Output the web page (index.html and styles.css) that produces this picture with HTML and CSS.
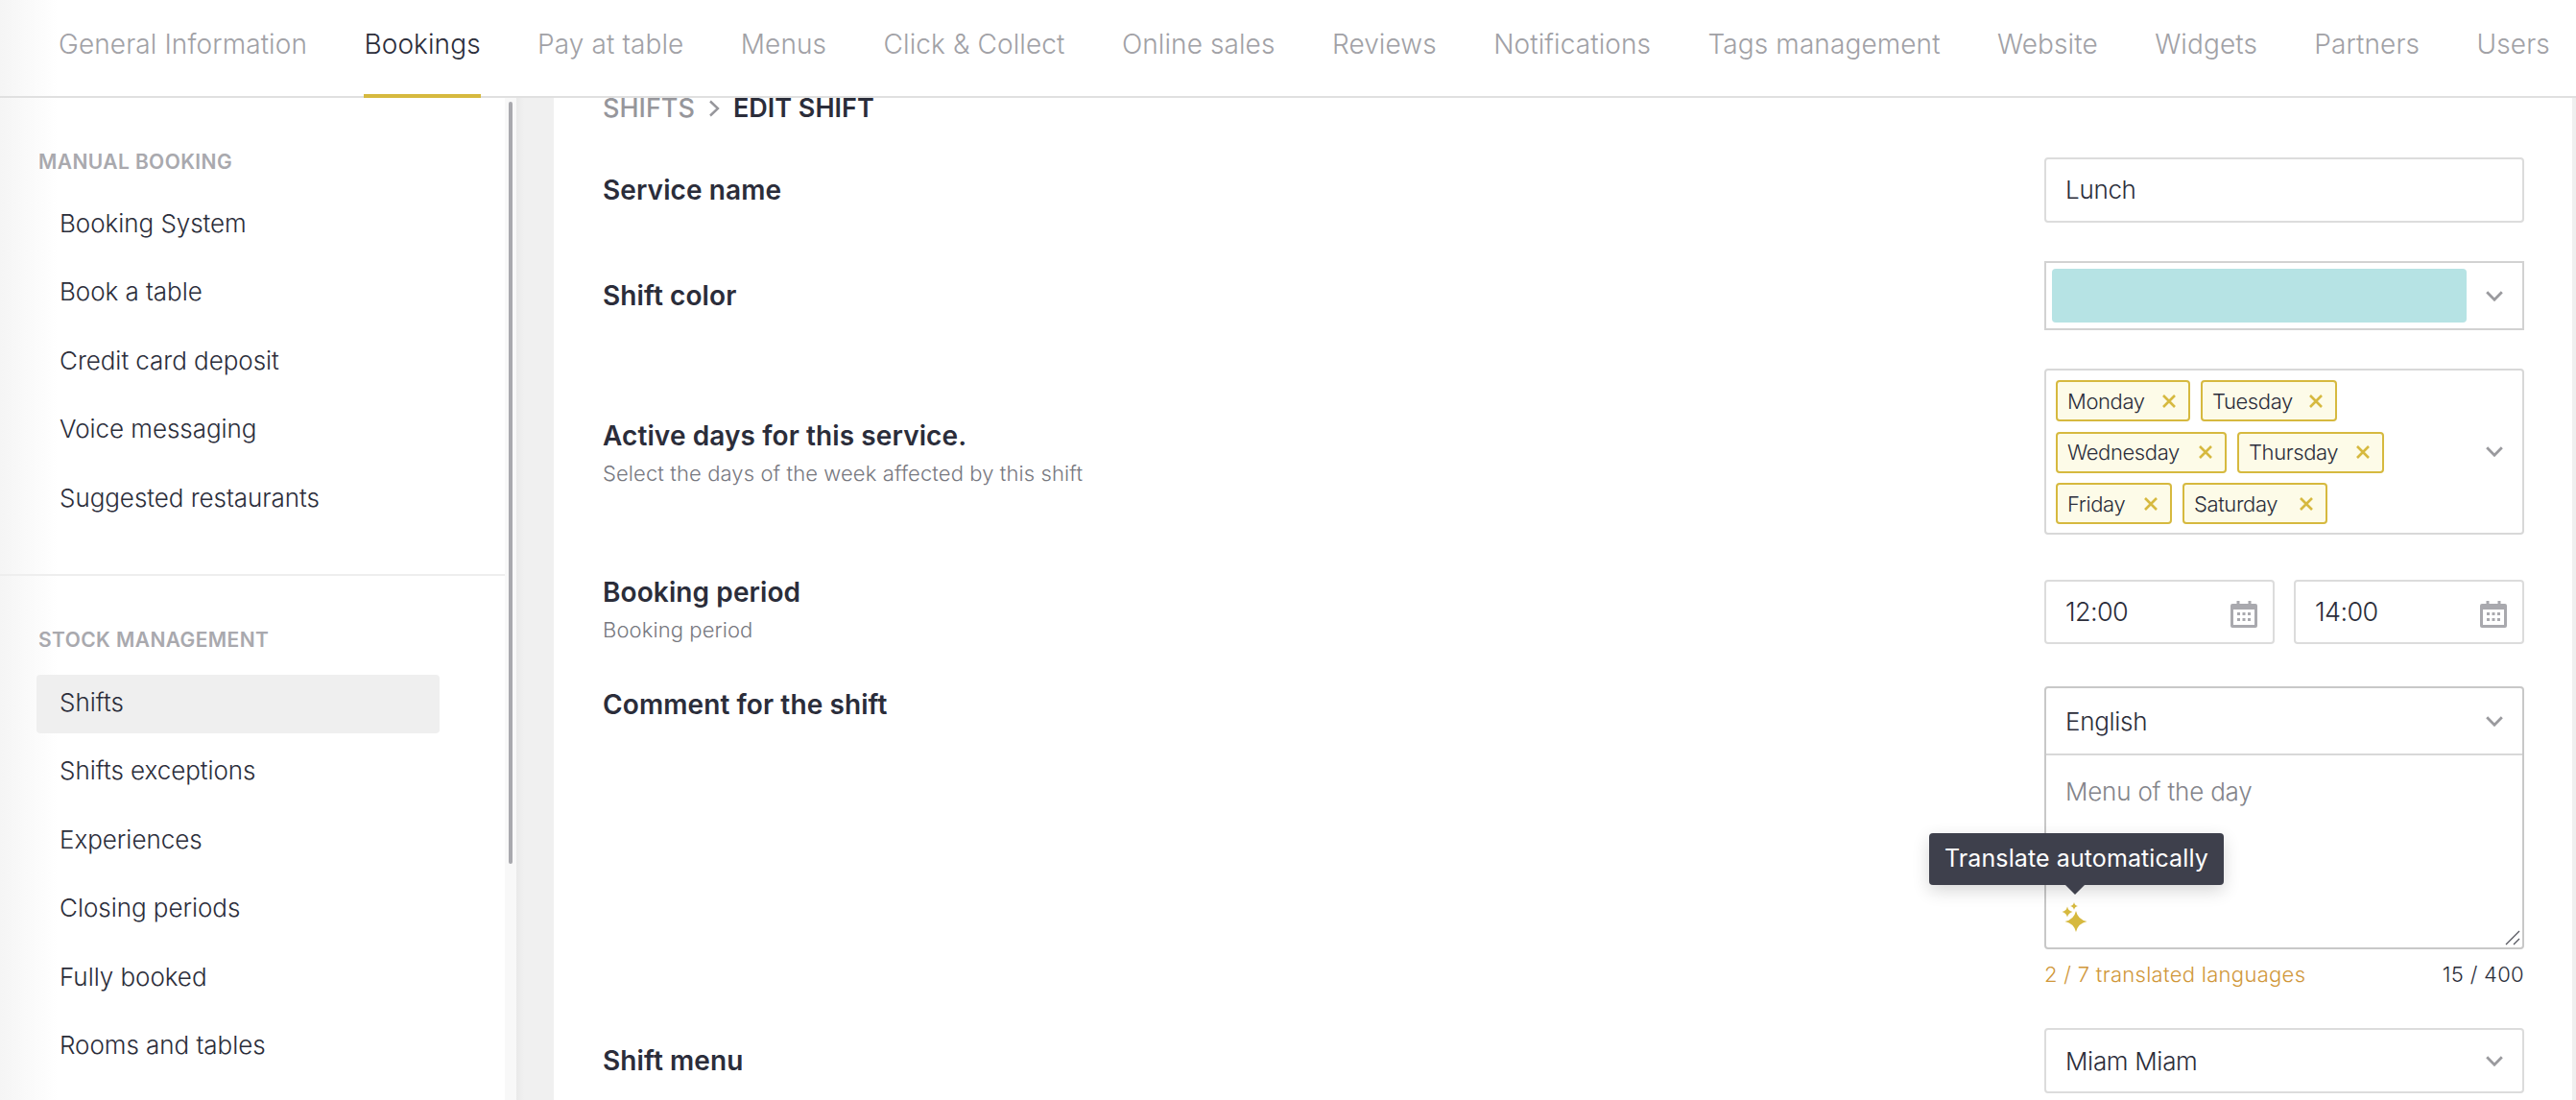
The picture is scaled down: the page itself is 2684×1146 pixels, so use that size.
FILE: index.html
```html
<!DOCTYPE html>
<html lang="en">
<head>
<meta charset="utf-8">
<title>Edit shift</title>
<link rel="stylesheet" href="styles.css">
</head>
<body>
<header class="topbar">
  <nav class="tabs">
    <a class="tab">General Information</a>
    <a class="tab active">Bookings</a>
    <a class="tab">Pay at table</a>
    <a class="tab">Menus</a>
    <a class="tab">Click &amp; Collect</a>
    <a class="tab">Online sales</a>
    <a class="tab">Reviews</a>
    <a class="tab">Notifications</a>
    <a class="tab">Tags management</a>
    <a class="tab">Website</a>
    <a class="tab">Widgets</a>
    <a class="tab">Partners</a>
    <a class="tab">Users</a>
  </nav>
</header>
<div class="layout">
  <aside class="sidebar">
    <div class="scrollthumb"></div>
    <section class="side-group first">
      <h3 class="side-title">MANUAL BOOKING</h3>
      <a class="side-item">Booking System</a>
      <a class="side-item">Book a table</a>
      <a class="side-item">Credit card deposit</a>
      <a class="side-item">Voice messaging</a>
      <a class="side-item">Suggested restaurants</a>
    </section>
    <section class="side-group">
      <h3 class="side-title">STOCK MANAGEMENT</h3>
      <a class="side-item selected">Shifts</a>
      <a class="side-item">Shifts exceptions</a>
      <a class="side-item">Experiences</a>
      <a class="side-item">Closing periods</a>
      <a class="side-item">Fully booked</a>
      <a class="side-item">Rooms and tables</a>
    </section>
  </aside>
  <div class="gutter"></div>
  <main class="panel">
    <div class="crumbs">
      <span class="crumb-parent">SHIFTS</span>
      <svg class="crumb-sep" viewBox="0 0 12 18" width="12" height="18"><path d="M2 1.5 10 9l-8 7.5" fill="none" stroke="#96969b" stroke-width="2.4"/></svg>
      <span class="crumb-current">EDIT SHIFT</span>
    </div>

    <div class="row r1">
      <div class="label"><div class="label-main">Service name</div></div>
      <div class="control"><div class="box input">Lunch</div></div>
    </div>

    <div class="row r2">
      <div class="label"><div class="label-main">Shift color</div></div>
      <div class="control">
        <div class="box color-select">
          <div class="swatch"></div>
          <svg class="chev" viewBox="0 0 18 11" width="18" height="11"><path d="M1.2 1.2 9 9.2l7.8-8" fill="none" stroke="#9a9a9e" stroke-width="2.8"/></svg>
        </div>
      </div>
    </div>

    <div class="row r3">
      <div class="label">
        <div class="label-main">Active days for this service.</div>
        <div class="label-sub">Select the days of the week affected by this shift</div>
      </div>
      <div class="control">
        <div class="box multi">
          <div class="chips">
            <div class="chip-line">
              <span class="chip w-mon">Monday<svg class="x" viewBox="0 0 14 14" width="14" height="14"><path d="M1 1l12 12M13 1 1 13" stroke="#d6b93f" stroke-width="2.6"/></svg></span>
              <span class="chip w-tue">Tuesday<svg class="x" viewBox="0 0 14 14" width="14" height="14"><path d="M1 1l12 12M13 1 1 13" stroke="#d6b93f" stroke-width="2.6"/></svg></span>
            </div>
            <div class="chip-line">
              <span class="chip w-wed">Wednesday<svg class="x" viewBox="0 0 14 14" width="14" height="14"><path d="M1 1l12 12M13 1 1 13" stroke="#d6b93f" stroke-width="2.6"/></svg></span>
              <span class="chip w-thu">Thursday<svg class="x" viewBox="0 0 14 14" width="14" height="14"><path d="M1 1l12 12M13 1 1 13" stroke="#d6b93f" stroke-width="2.6"/></svg></span>
            </div>
            <div class="chip-line">
              <span class="chip w-fri">Friday<svg class="x" viewBox="0 0 14 14" width="14" height="14"><path d="M1 1l12 12M13 1 1 13" stroke="#d6b93f" stroke-width="2.6"/></svg></span>
              <span class="chip w-sat">Saturday<svg class="x" viewBox="0 0 14 14" width="14" height="14"><path d="M1 1l12 12M13 1 1 13" stroke="#d6b93f" stroke-width="2.6"/></svg></span>
            </div>
          </div>
          <svg class="chev" viewBox="0 0 18 11" width="18" height="11"><path d="M1.2 1.2 9 9.2l7.8-8" fill="none" stroke="#9a9a9e" stroke-width="2.8"/></svg>
        </div>
      </div>
    </div>

    <div class="row r4">
      <div class="label">
        <div class="label-main">Booking period</div>
        <div class="label-sub">Booking period</div>
      </div>
      <div class="control times">
        <div class="box time">
          <span class="time-text">12:00</span>
          <svg class="cal" viewBox="0 0 28 28" width="28" height="28"><path fill="#a9a9ae" fill-rule="evenodd" d="M6.500 0h3v3h9V0h3v3H26a2 2 0 0 1 2 2v21a2 2 0 0 1-2 2H2a2 2 0 0 1-2-2V5a2 2 0 0 1 2-2h4.500V0ZM3 9v16h22V9H3Z"/><path fill="#a9a9ae" d="M7 12h3v3H7zM12.500 12h3v3h-3zM18 12h3v3h-3zM7 18h3v3H7zM12.500 18h3v3h-3zM18 18h3v3h-3z"/></svg>
        </div>
        <div class="box time">
          <span class="time-text">14:00</span>
          <svg class="cal" viewBox="0 0 28 28" width="28" height="28"><path fill="#a9a9ae" fill-rule="evenodd" d="M6.500 0h3v3h9V0h3v3H26a2 2 0 0 1 2 2v21a2 2 0 0 1-2 2H2a2 2 0 0 1-2-2V5a2 2 0 0 1 2-2h4.500V0ZM3 9v16h22V9H3Z"/><path fill="#a9a9ae" d="M7 12h3v3H7zM12.500 12h3v3h-3zM18 12h3v3h-3zM7 18h3v3H7zM12.500 18h3v3h-3zM18 18h3v3h-3z"/></svg>
        </div>
      </div>
    </div>

    <div class="row r5">
      <div class="label"><div class="label-main">Comment for the shift</div></div>
      <div class="control">
        <div class="translate-box">
          <div class="lang-head">
            <span>English</span>
            <svg class="chev" viewBox="0 0 18 11" width="18" height="11"><path d="M1.2 1.2 9 9.2l7.8-8" fill="none" stroke="#9a9a9e" stroke-width="2.8"/></svg>
          </div>
          <div class="text-area">
            <div class="placeholder">Menu of the day</div>
            <svg class="sparkle" viewBox="0 0 30 38" width="30" height="38"><path fill="#d6b93f" d="M15 14Q17 23 26.500 25 17 27 15 36 13 27 3.500 25 13 23 15 14Z"/><path fill="#d6b93f" d="M6 9.500Q7 14 11.500 15 7 16 6 20.500 5 16 .5 15 5 14 6 9.500Z"/><path fill="#d6b93f" d="M13 5Q13.700 8.300 17 9 13.700 9.700 13 13 12.300 9.700 9 9 12.300 8.300 13 5Z"/></svg>
            <svg class="resizer" viewBox="0 0 16 16" width="16" height="16"><path d="M1 15 15 1M9 15l6-6" stroke="#55565e" stroke-width="1.300" fill="none"/></svg>
          </div>
          <div class="tooltip">Translate automatically</div>
        </div>
        <div class="box-foot">
          <span class="translated">2 / 7 translated languages</span>
          <span class="count">15 / 400</span>
        </div>
      </div>
    </div>

    <div class="row r6">
      <div class="label"><div class="label-main">Shift menu</div></div>
      <div class="control">
        <div class="box input select">
          <span>Miam Miam</span>
          <svg class="chev" viewBox="0 0 18 11" width="18" height="11"><path d="M1.2 1.2 9 9.2l7.8-8" fill="none" stroke="#9a9a9e" stroke-width="2.8"/></svg>
        </div>
      </div>
    </div>
  </main>
</div>
</body>
</html>
```

FILE: styles.css
```css
* { box-sizing: border-box; }
html, body { height: 100%; }
body {
  margin: 0;
  height: 1146px;
  overflow: hidden;
  background: #fff;
  color: #2b2d3a;
  font-family: "Inter", "Liberation Sans", sans-serif;
  font-weight: 300;
  display: flex;
  flex-direction: column;
}

.topbar {
  height: 102px;
  flex: none;
  border-bottom: 2px solid #e0e0e0;
  background: linear-gradient(90deg, #f5f5f5 0, #fff 60px);
}
.tabs {
  display: flex;
  gap: 59.400px;
  padding-left: 61px;
  height: 100px;
}
.tab {
  height: 102px;
  line-height: 92px;
  font-size: 28px;
  letter-spacing: 0.1px;
  color: #a1a1a6;
  white-space: nowrap;
}
.tab.active {
  color: #2b2d3a;
  border-bottom: 4px solid #d6b93f;
}

.layout { flex: 1; display: flex; min-height: 0; }

.sidebar {
  position: relative;
  width: 538px;
  flex: none;
  padding-right: 12px;
  overflow: hidden;
  background: linear-gradient(90deg, #f5f5f5 0, #fff 60px, #fff 526px, #f8f8f8 526px);
}
.scrollthumb {
  position: absolute;
  top: 4px;
  left: 530px;
  width: 4px;
  height: 794px;
  border-radius: 2px;
  background: #a9a9ae;
}
.side-group { padding: 52px 0 0 38px; }
.side-group.first { padding-top: 52px; border-bottom: 2px solid #eee; height: 498px; }
.side-title {
  margin: 0 0 0 2px;
  height: 30px;
  line-height: 30px;
  font-size: 21px;
  font-weight: 600;
  letter-spacing: 0.400px;
  color: #a9a9ae;
}
.first .side-title { margin-bottom: 20px; }
.side-item {
  display: block;
  width: 420px;
  height: 61px;
  line-height: 58px;
  padding-left: 24px;
  margin-bottom: 10.400px;
  font-size: 26px;
  letter-spacing: -0.050px;
  color: #2b2d3a;
  border-radius: 4px;
}
.side-title + .side-item.selected { margin-top: 21px; }
.side-item.selected { background: #efefef; }

.gutter { width: 39px; flex: none; background: linear-gradient(90deg, #e9e9e9, #f0f0f0 8px); }

.panel {
  flex: 1;
  min-width: 0;
  padding: 0 50px 0 51px;
  margin-right: 4px;
  background: #fff;
  box-shadow: 4px 0 0 #efefef;
}
.crumbs {
  display: flex;
  align-items: center;
  height: 22px;
  gap: 14px;
  font-size: 27px;
  line-height: 22px;
  font-weight: 500;
}
.crumb-parent { color: #96969b; }
.crumb-current { color: #2b2d3a; font-weight: 600; }

.row { display: flex; justify-content: space-between; align-items: center; }
.r1, .r2, .r3 { margin-top: 40px; }
.r4 { margin-top: 41px; align-items: flex-start; }
.r4 .times { margin-top: 6px; }
.r5 { margin-top: 44px; align-items: flex-start; }
.r6 { margin-top: 30px; }

.label { flex: 1; min-width: 0; }
.label-main { font-size: 28px; font-weight: 600; line-height: 38px; letter-spacing: 0.1px; color: #2b2d3a; }
.label-sub { margin-top: 6px; font-size: 22px; line-height: 28px; letter-spacing: 0.1px; color: #77787f; }

.control { width: 500px; flex: none; }
.box { border: 2px solid #dcdcdc; border-radius: 4px; background: #fff; }
.input {
  height: 68px;
  line-height: 64px;
  padding-left: 20px;
  font-size: 26px;
  letter-spacing: -0.3px;
}
.select {
  display: flex;
  align-items: center;
  justify-content: space-between;
  padding-right: 20px;
  line-height: normal;
}
.color-select {
  height: 72px;
  border-radius: 0;
  border-color: #d2d2d2;
  padding: 6px 20px 6px 6px;
  display: flex;
  align-items: center;
  justify-content: space-between;
}
.swatch { width: 432px; height: 56px; border-radius: 4px; background: #b6e3e4; }
.multi {
  height: 173px;
  padding: 0 20px 0 10px;
  display: flex;
  align-items: center;
  justify-content: space-between;
  border-color: #d8d8d8;
}
.chips { align-self: flex-start; margin-top: 10px; display: flex; flex-direction: column; gap: 10.500px; }
.chip-line { display: flex; gap: 11px; }
.chip {
  display: flex;
  align-items: center;
  justify-content: space-between;
  height: 43px;
  padding: 0 13px 0 10px;
  border: 2px solid #d6b93f;
  border-radius: 4px;
  background: #fdfbe8;
  font-size: 22px;
  letter-spacing: -0.4px;
  white-space: nowrap;
}
.w-mon { width: 140px; }
.w-tue { width: 142px; }
.w-wed { width: 178px; }
.w-thu { width: 153px; }
.w-fri { width: 121px; }
.w-sat { width: 151px; }

.times { display: flex; gap: 20px; }
.time {
  width: 240px;
  height: 67px;
  display: flex;
  align-items: center;
  justify-content: space-between;
  padding: 0 16px 0 20px;
}
.time-text { font-size: 27px; letter-spacing: -0.6px; }
.cal { margin-top: 4px; }

.translate-box {
  position: relative;
  height: 274px;
  border: 2px solid #c8c8c8;
  border-radius: 4px;
}
.lang-head {
  height: 70px;
  border-bottom: 2px solid #d8d8d8;
  display: flex;
  align-items: center;
  justify-content: space-between;
  padding: 0 20px;
  font-size: 26px;
  letter-spacing: -0.3px;
}
.text-area { position: relative; padding: 20px 20px 0; height: 200px; }
.placeholder { font-size: 26px; line-height: 36px; letter-spacing: -0.2px; color: #83848a; }
.sparkle { position: absolute; left: 16px; top: 148px; }
.resizer { position: absolute; right: 2px; bottom: 2px; }
.tooltip {
  position: absolute;
  left: -122px;
  top: 151px;
  width: 307px;
  height: 54px;
  line-height: 52px;
  padding-left: 16px;
  border-radius: 4px;
  background: #3e404c;
  color: #fff;
  font-size: 25px;
  font-weight: 400;
  letter-spacing: 0.1px;
  white-space: nowrap;
  box-shadow: 0 6px 18px rgba(0, 0, 0, .16);
}
.tooltip::after {
  content: "";
  position: absolute;
  left: 142px;
  top: 54px;
  border: 10px solid transparent;
  border-top-color: #3e404c;
  border-bottom: 0;
}
.box-foot {
  display: flex;
  justify-content: space-between;
  align-items: center;
  height: 52px;
  font-size: 22px;
  letter-spacing: 0.3px;
}
.translated { color: #d0973a; }
.count { color: #2b2d3a; }
```
